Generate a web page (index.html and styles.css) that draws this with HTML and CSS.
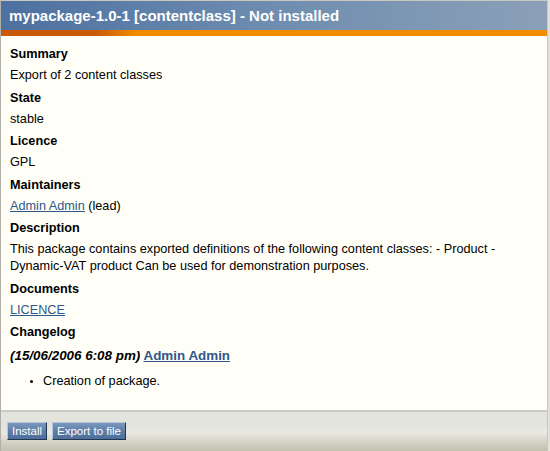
FILE: index.html
```html
<!DOCTYPE html>
<html>
<head>
<meta charset="utf-8">
<link rel="stylesheet" href="styles.css">
</head>
<body>
<div class="box">
  <div class="titlebar"><h1>mypackage-1.0-1 [contentclass] - Not installed</h1></div>
  <div class="stripe"></div>
  <div class="content">
    <div class="block"><div class="label">Summary</div><p>Export of 2 content classes</p></div>
    <div class="block"><div class="label">State</div><p>stable</p></div>
    <div class="block"><div class="label">Licence</div><p>GPL</p></div>
    <div class="block"><div class="label">Maintainers</div><p><a href="#">Admin Admin</a> (lead)</p></div>
    <div class="block"><div class="label">Description</div><p>This package contains exported definitions of the following content classes: - Product - Dynamic-VAT product Can be used for demonstration purposes.</p></div>
    <div class="block"><div class="label">Documents</div><p><a href="#">LICENCE</a></p></div>
    <div class="block">
      <div class="label label-log">Changelog</div>
      <p class="logentry"><em>(15/06/2006 6:08 pm)</em> <a href="#">Admin Admin</a></p>
      <ul class="changes"><li>Creation of package.</li></ul>
    </div>
  </div>
  <div class="footer">
    <button class="btn">Install</button>
    <button class="btn">Export to file</button>
  </div>
</div>
</body>
</html>
```
FILE: styles.css
```css
html, body {
  margin: 0;
  padding: 0;
}
body {
  background: #e2e2da;
  font-family: "Liberation Sans", Arial, sans-serif;
  color: #000;
  height: 451px;
  overflow: hidden;
}
.box {
  width: 546px;
  height: 450px;
  margin-right: 2px;
  border-top: 1px solid #c8c8c0;
  border-left: 1px solid #b0b0a8;
  border-right: 1px solid #c8c8c0;
  display: flex;
  flex-direction: column;
  background: #fffff8;
}
.titlebar {
  height: 29px;
  background: linear-gradient(to right, #4c70a0 0%, #6f8db0 50%, #8ba0b8 100%);
  display: flex;
  align-items: center;
  padding-left: 8px;
}
.titlebar h1 {
  margin: 0;
  font-size: 15px;
  font-weight: bold;
  color: #fff;
  line-height: 18px;
  padding-top: 1px;
}
.stripe {
  height: 6px;
  background: linear-gradient(to right, #c85a08 0px, #c85a08 95px, #f08c00 135px, #f08c00 100%);
}
.content {
  flex: 1;
  padding: 10px 9px 0 9px;
  font-size: 12.7px;
  line-height: 17px;
}
.block {
  margin-bottom: 5.5px;
}
.label {
  font-weight: bold;
  margin-bottom: 4px;
}
.label-log {
  margin-bottom: 6px;
}
.block p {
  margin: 0;
}
a {
  color: #2f578a;
  text-decoration: underline;
}
.logentry {
  font-size: 13.4px;
  font-weight: bold;
}
.logentry em {
  font-style: italic;
}
.changes {
  margin: 9px 0 0 0;
  padding-left: 33px;
  list-style: disc;
}
.changes li::marker {
  font-size: 10px;
}
.footer {
  height: 29px;
  flex-shrink: 0;
  border-top: 2px solid #cacac2;
  padding: 10px 0 0 6px;
  display: flex;
  align-items: flex-start;
  gap: 5px;
  background: linear-gradient(to bottom, #e4e4de 0%, #e4e4de 40%, #eaeae4 52%, #d0d0c2 80%, #c2c2b2 100%);
}
.btn {
  font-family: "Liberation Sans", Arial, sans-serif;
  font-size: 11.5px;
  color: #fff;
  height: 18px;
  line-height: 14px;
  padding: 1px 4px 1px 4px;
  margin: 0;
  border: 1px solid;
  border-color: #b8c8dc #22364f #22364f #b8c8dc;
  background: linear-gradient(to bottom, #7a98bd 0%, #5e7fa9 50%, #4d6e9a 100%);
  cursor: pointer;
}
```
